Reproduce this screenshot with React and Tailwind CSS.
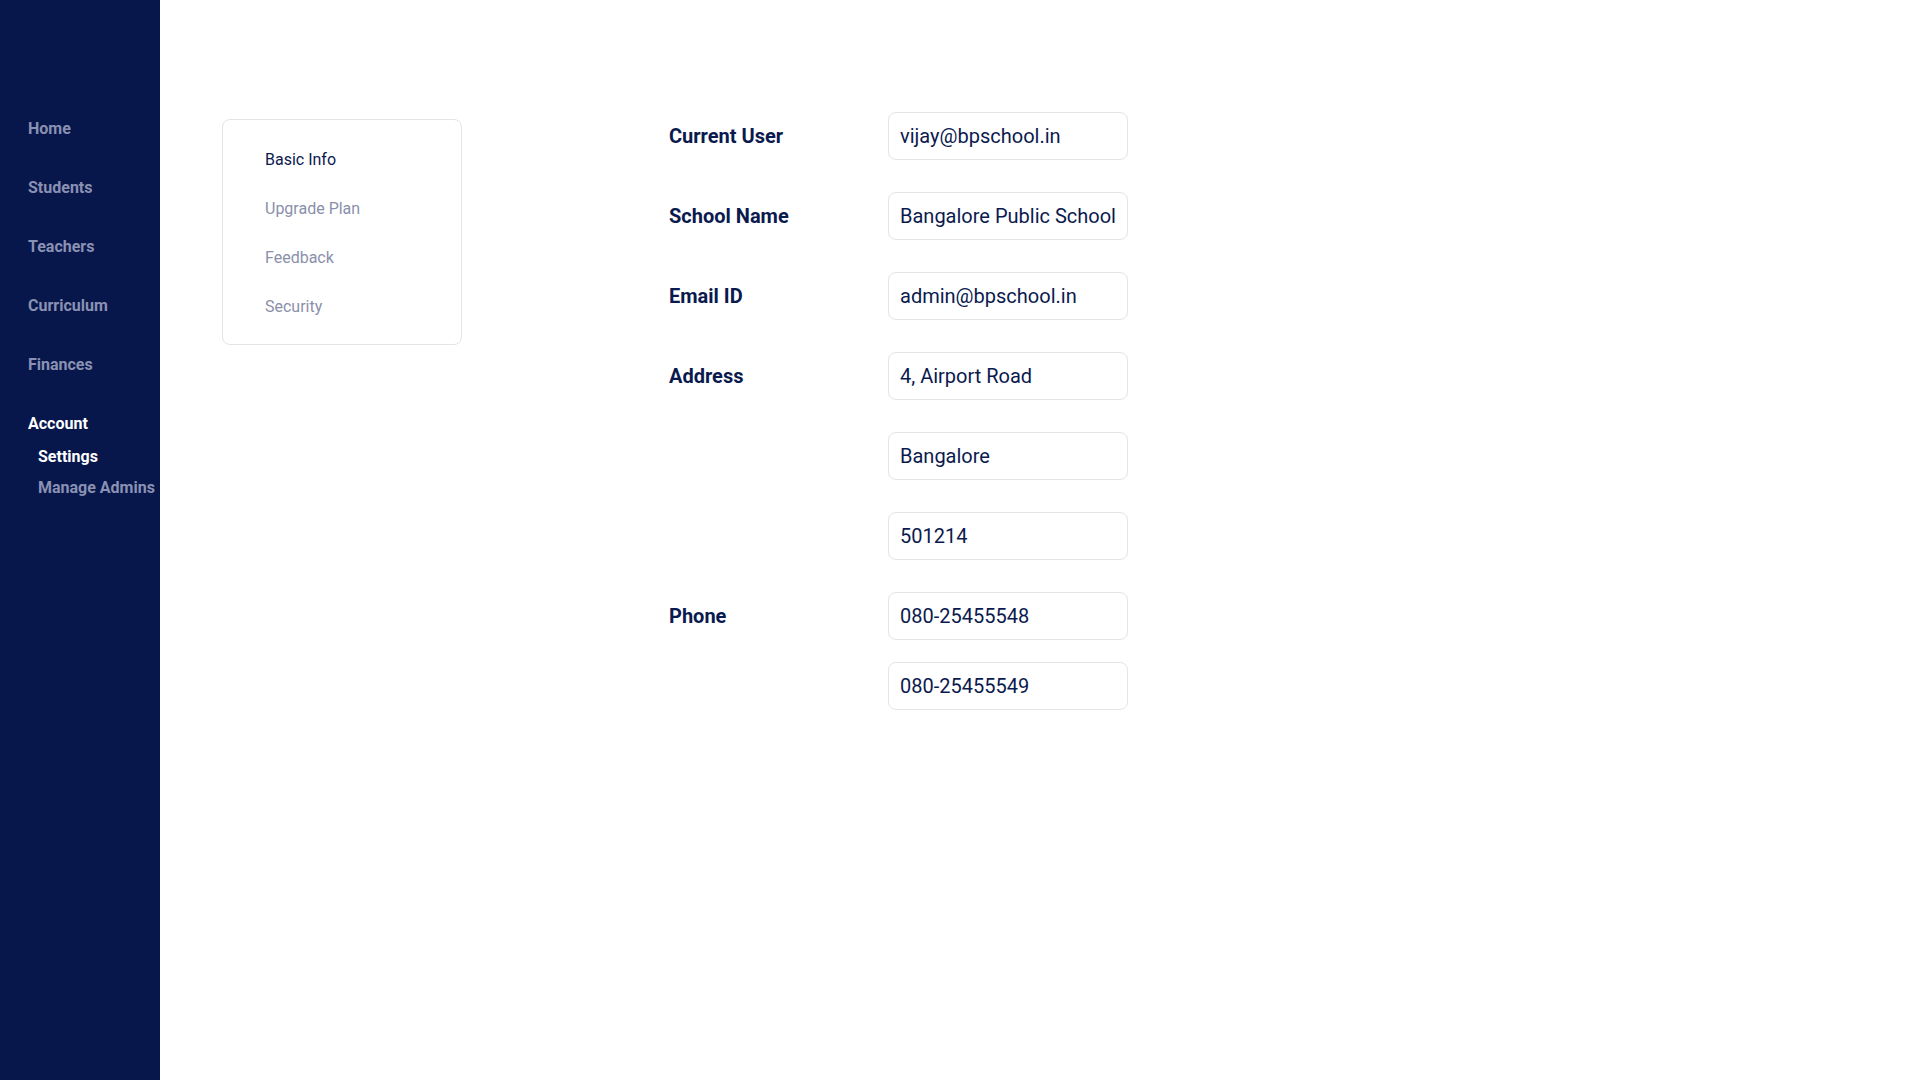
export default function App() {
  const nav = ["Home", "Students", "Teachers", "Curriculum", "Finances"];
  const tabs = ["Basic Info", "Upgrade Plan", "Feedback", "Security"];
  const Input = ({ value }) => (
    <input
      readOnly
      value={value}
      className="w-[240px] h-[48px] border border-[#e3e4e8] rounded-lg px-[11px] text-[20px] text-[#0b1a4e] bg-white outline-none"
      style={{ fontFamily: "Roboto, sans-serif" }}
    />
  );
  const Row = ({ label, value }) => (
    <div className="flex items-center">
      <div className="w-[219px] text-[20px] font-bold text-[#0b1a4e] leading-6">{label}</div>
      <Input value={value} />
    </div>
  );
  return (
    <div className="flex w-full h-[1080px] bg-white" style={{ fontFamily: "Roboto, sans-serif" }}>
      <aside className="w-[160px] shrink-0 bg-[#07174b] pt-[117px] pl-[28px]">
        <div className="flex flex-col gap-[35px]">
          {nav.map((n) => (
            <div key={n} className="text-[16px] font-bold leading-6 text-[#8a91b3]">{n}</div>
          ))}
          <div>
            <div className="text-[16px] font-bold leading-6 text-white">Account</div>
            <div className="pl-[10px] mt-[9px]">
              <div className="text-[16px] font-bold leading-6 text-white">Settings</div>
              <div className="text-[16px] font-bold leading-6 text-[#8a91b3] mt-[7px] whitespace-nowrap">Manage Admins</div>
            </div>
          </div>
        </div>
      </aside>
      <main className="flex-1 flex items-start pt-[112px] pl-[62px]">
        <div className="mt-[7px] w-[240px] h-[226px] border border-[#e3e4e8] rounded-lg pt-[28px] pl-[42px]">
          <div className="flex flex-col gap-[25px]">
            {tabs.map((t, i) => (
              <div
                key={t}
                className={
                  "text-[16px] leading-6 " +
                  (i === 0 ? "text-[#0b1a4e]" : "text-[#8a90aa]")
                }
              >
                {t}
              </div>
            ))}
          </div>
        </div>
        <div className="ml-[207px] flex flex-col">
          <div className="flex flex-col gap-[32px]">
            <Row label="Current User" value="vijay@bpschool.in" />
            <Row label="School Name" value="Bangalore Public School" />
            <Row label="Email ID" value="admin@bpschool.in" />
            <Row label="Address" value="4, Airport Road" />
            <Row label="" value="Bangalore" />
            <Row label="" value="501214" />
            <Row label="Phone" value="080-25455548" />
          </div>
          <div className="mt-[22px]">
            <Row label="" value="080-25455549" />
          </div>
        </div>
      </main>
    </div>
  );
}
